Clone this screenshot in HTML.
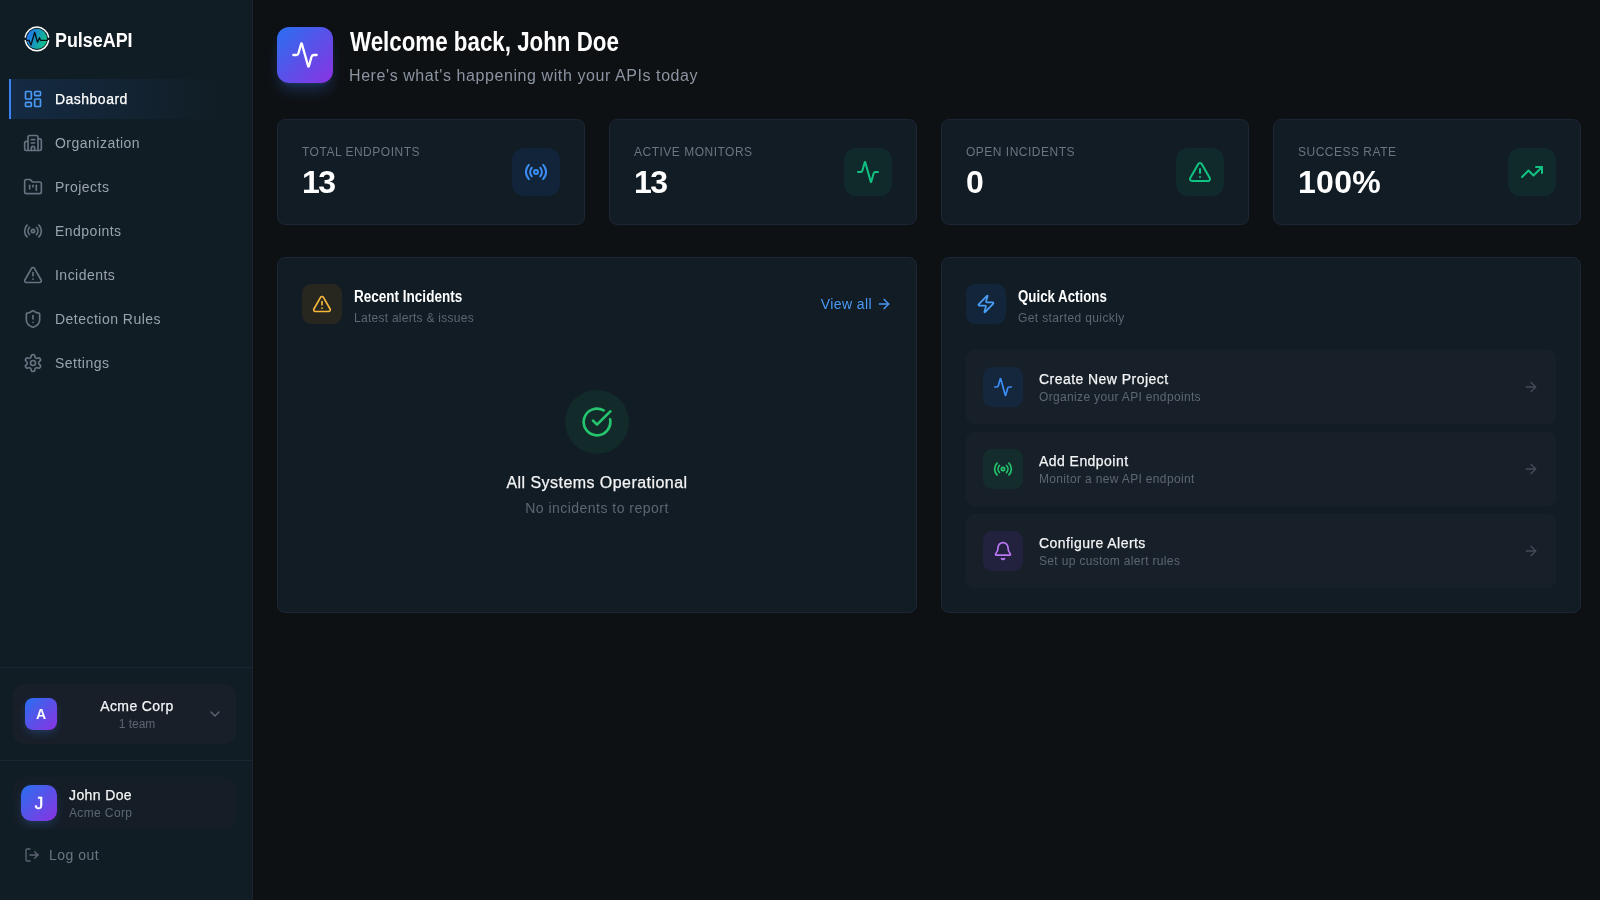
<!DOCTYPE html>
<html><head><meta charset="utf-8">
<style>
*{margin:0;padding:0;box-sizing:border-box}
html,body{width:1600px;height:900px;overflow:hidden;background:#0e1114;font-family:"Liberation Sans",sans-serif;color:#f3f4f6}
.abs{position:absolute}
svg{display:block;fill:none;stroke:currentColor;stroke-linecap:round;stroke-linejoin:round}
#sb{position:absolute;left:0;top:0;width:253px;height:900px;background:#111d24;border-right:1px solid #1b2532}
.nav{position:absolute;left:9px;width:234px;height:40px;color:#9aa3ae;font-size:14px;letter-spacing:.48px}
.nav svg{position:absolute;left:14px;top:10px;width:20px;height:20px;stroke-width:2;color:#687180}
.nav span{position:absolute;left:46px;top:0;line-height:40px;white-space:nowrap}
.nav.act{background:linear-gradient(90deg,rgba(40,120,245,.15),rgba(40,120,245,.05) 60%,rgba(40,120,245,0) 92%);color:#fff;border-left:2px solid #3b82f6}
.nav.act svg{left:12px;color:#4a9af5}
.nav.act span{left:44px}
.card{position:absolute;background:#111c24;border:1px solid #1c2634;border-radius:8px}
.lbl{position:absolute;left:24px;top:24px;font-size:12px;line-height:16px;letter-spacing:.5px;color:#6b7480;text-transform:uppercase;white-space:nowrap}
.num{position:absolute;left:24px;top:44px;font-size:32px;line-height:36px;font-weight:bold;color:#fff;letter-spacing:-1.6px}
.ibox{position:absolute;right:24px;top:28px;width:48px;height:48px;border-radius:12px}
.ibox svg{position:absolute;left:12px;top:12px;width:24px;height:24px;stroke-width:2}
.med{-webkit-text-stroke:.25px currentColor}
.cond{display:inline-block;transform-origin:0 50%;white-space:nowrap;font-weight:bold}
.qa{position:absolute;left:24px;width:590px;height:74px;background:#172029;border:1px solid #18212a;border-radius:8px}
.qa .ic{position:absolute;left:16px;top:16px;width:40px;height:40px;border-radius:9px}
.qa .ic svg{position:absolute;left:10px;top:10px;width:20px;height:20px;stroke-width:2}
.qa .t{position:absolute;left:72px;top:18px;font-size:14px;line-height:20px;color:#f3f4f6;white-space:nowrap;letter-spacing:.45px;-webkit-text-stroke:.25px currentColor}
.qa .s{position:absolute;left:72px;top:38px;font-size:12px;line-height:16px;color:#5d6673;white-space:nowrap;letter-spacing:.34px}
.qa .arr{position:absolute;right:16px;top:28px;width:16px;height:16px;color:#444c57;stroke-width:2}
</style></head><body>
<div id="root" style="position:absolute;left:0;top:0;width:1600px;height:900px;will-change:transform">
<div id="sb">
  <!-- logo -->
  <svg class="abs" style="left:23px;top:26px;width:28px;height:28px" viewBox="0 0 28 28">
    <defs><linearGradient id="lg" x1="0" y1="0.3" x2="1" y2="0.7"><stop offset="0" stop-color="#1f74f2"/><stop offset="1" stop-color="#0fc47f"/></linearGradient></defs>
    <circle cx="13.9" cy="12.9" r="10.2" fill="url(#lg)" stroke="none"/>
    <path d="M2.24 11.1A11.8 11.8 0 0 1 25.56 11.1M25.56 14.7A11.8 11.8 0 0 1 2.24 14.7" stroke="#fff" stroke-width="1.5"/>
    <path d="M4 14.3H6L8 19L11.7 6.3L14.5 16.2L16.5 11.7L17.5 14.3H23.8" stroke="#0b0f14" stroke-width="1.3"/>
  </svg>
  <div class="abs" style="left:55px;top:28px;font-size:20px;line-height:24px;color:#fff"><span class="cond" id="logoT" style="transform:scaleX(.895)">PulseAPI</span></div>

  <div class="nav act" style="top:79px"><svg viewBox="0 0 24 24"><rect width="7" height="9" x="3" y="3" rx="1"/><rect width="7" height="5" x="14" y="3" rx="1"/><rect width="7" height="9" x="14" y="12" rx="1"/><rect width="7" height="5" x="3" y="16" rx="1"/></svg><span class="med">Dashboard</span></div>
  <div class="nav" style="top:123px"><svg viewBox="0 0 24 24"><path d="M10 12h4"/><path d="M10 8h4"/><path d="M14 21v-3a2 2 0 0 0-4 0v3"/><path d="M6 10H4a2 2 0 0 0-2 2v7a2 2 0 0 0 2 2h16a2 2 0 0 0 2-2V9a2 2 0 0 0-2-2h-2"/><path d="M6 21V5a2 2 0 0 1 2-2h8a2 2 0 0 1 2 2v16"/></svg><span>Organization</span></div>
  <div class="nav" style="top:167px"><svg viewBox="0 0 24 24"><path d="M4 20h16a2 2 0 0 0 2-2V8a2 2 0 0 0-2-2h-7.93a2 2 0 0 1-1.66-.9l-.82-1.2A2 2 0 0 0 7.93 3H4a2 2 0 0 0-2 2v13c0 1.1.9 2 2 2Z"/><path d="M8 10v4"/><path d="M12 10v2"/><path d="M16 10v6"/></svg><span>Projects</span></div>
  <div class="nav" style="top:211px"><svg viewBox="0 0 24 24"><path d="M4.9 19.1C1 15.2 1 8.8 4.9 4.9"/><path d="M7.8 16.2c-2.3-2.3-2.3-6.1 0-8.5"/><circle cx="12" cy="12" r="2"/><path d="M16.2 7.8c2.3 2.3 2.3 6.1 0 8.5"/><path d="M19.1 4.9C23 8.8 23 15.1 19.1 19"/></svg><span>Endpoints</span></div>
  <div class="nav" style="top:255px"><svg viewBox="0 0 24 24"><path d="m21.73 18-8-14a2 2 0 0 0-3.48 0l-8 14A2 2 0 0 0 4 21h16a2 2 0 0 0 1.73-3"/><path d="M12 9v4"/><path d="M12 17h.01"/></svg><span>Incidents</span></div>
  <div class="nav" style="top:299px"><svg viewBox="0 0 24 24"><path d="M20 13c0 5-3.5 7.5-7.66 8.95a1 1 0 0 1-.67-.01C7.5 20.5 4 18 4 13V6a1 1 0 0 1 1-1c2 0 4.5-1.2 6.24-2.72a1.170 1.170 0 0 1 1.52 0C14.51 3.81 17 5 19 5a1 1 0 0 1 1 1z"/><path d="M12 8v4"/><path d="M12 16h.01"/></svg><span>Detection Rules</span></div>
  <div class="nav" style="top:343px"><svg viewBox="0 0 24 24"><path d="M12.22 2h-.44a2 2 0 0 0-2 2v.18a2 2 0 0 1-1 1.73l-.43.25a2 2 0 0 1-2 0l-.15-.08a2 2 0 0 0-2.730.73l-.22.38a2 2 0 0 0 .73 2.73l.15.1a2 2 0 0 1 1 1.72v.51a2 2 0 0 1-1 1.74l-.15.09a2 2 0 0 0-.73 2.73l.22.38a2 2 0 0 0 2.73.73l.15-.08a2 2 0 0 1 2 0l.43.25a2 2 0 0 1 1 1.73V20a2 2 0 0 0 2 2h.44a2 2 0 0 0 2-2v-.18a2 2 0 0 1 1-1.73l.43-.25a2 2 0 0 1 2 0l.15.08a2 2 0 0 0 2.73-.73l.22-.39a2 2 0 0 0-.73-2.73l-.15-.08a2 2 0 0 1-1-1.74v-.5a2 2 0 0 1 1-1.74l.15-.09a2 2 0 0 0 .73-2.73l-.22-.38a2 2 0 0 0-2.73-.73l-.15.08a2 2 0 0 1-2 0l-.43-.25a2 2 0 0 1-1-1.73V4a2 2 0 0 0-2-2z"/><circle cx="12" cy="12" r="3"/></svg><span>Settings</span></div>

  <div class="abs" style="left:0;top:667px;width:252px;height:1px;background:#1b2532"></div>
  <div class="abs" style="left:13px;top:684px;width:223px;height:60px;background:#181f29;border-radius:12px"></div>
  <div class="abs" style="left:25px;top:698px;width:32px;height:32px;border-radius:8px;background:linear-gradient(135deg,#2870f0,#8b32e2);box-shadow:0 4px 10px -2px rgba(59,130,246,.3);color:#fff;font-weight:bold;font-size:14px;line-height:32px;text-align:center">A</div>
  <div class="abs" style="left:57px;top:697px;width:160px;text-align:center;font-size:14px;line-height:18px;color:#f3f4f6;letter-spacing:.4px;-webkit-text-stroke:.25px currentColor">Acme Corp</div>
  <div class="abs" style="left:57px;top:716px;width:160px;text-align:center;font-size:12px;line-height:16px;color:#5d6673">1 team</div>
  <svg class="abs" style="left:207px;top:706px;width:16px;height:16px;color:#5d6673;stroke-width:2" viewBox="0 0 24 24"><path d="m6 9 6 6 6-6"/></svg>

  <div class="abs" style="left:0;top:760px;width:252px;height:1px;background:#1b2532"></div>
  <div class="abs" style="left:13px;top:777px;width:223px;height:52px;background:#151e27;border-radius:12px"></div>
  <div class="abs" style="left:21px;top:785px;width:36px;height:36px;border-radius:10px;background:linear-gradient(135deg,#2870f0,#8b32e2);box-shadow:0 4px 10px -2px rgba(59,130,246,.3);color:#fff;font-size:17px;line-height:37px;text-align:center;-webkit-text-stroke:.5px #fff">J</div>
  <div class="abs" style="left:69px;top:786px;font-size:14px;line-height:18px;color:#f3f4f6;letter-spacing:.38px;-webkit-text-stroke:.25px currentColor">John Doe</div>
  <div class="abs" style="left:69px;top:805px;font-size:12px;line-height:16px;color:#5d6673;letter-spacing:.37px">Acme Corp</div>
  <svg class="abs" style="left:24px;top:847px;width:16px;height:16px;color:#5d6673;stroke-width:2" viewBox="0 0 24 24"><path d="M9 21H5a2 2 0 0 1-2-2V5a2 2 0 0 1 2-2h4"/><polyline points="16 17 21 12 16 7"/><line x1="21" x2="9" y1="12" y2="12"/></svg>
  <div class="abs" style="left:49px;top:846px;font-size:14px;line-height:18px;color:#6b7480;letter-spacing:.5px">Log out</div>
</div>

<!-- header -->
<div class="abs" style="left:277px;top:27px;width:56px;height:56px;border-radius:12px;background:linear-gradient(135deg,#2870f0,#8b32e2);box-shadow:0 10px 15px -3px rgba(59,130,246,.25),0 4px 6px -4px rgba(59,130,246,.25)">
  <svg class="abs" style="left:14px;top:14px;width:28px;height:28px;color:#fff;stroke-width:2" viewBox="0 0 24 24"><path d="M22 12h-2.48a2 2 0 0 0-1.930 1.46l-2.35 8.36a.25.25 0 0 1-.48 0L9.24 2.18a.25.25 0 0 0-.48 0l-2.35 8.36A2 2 0 0 1 4.49 12H2"/></svg>
</div>
<div class="abs" style="left:350px;top:26px;font-size:27px;line-height:32px;color:#fff"><span class="cond" id="ttl" style="transform:scaleX(.827)">Welcome back, John Doe</span></div>
<div class="abs" style="left:349px;top:66px;font-size:16px;line-height:20px;color:#8b94a1;white-space:nowrap;letter-spacing:.58px">Here's what's happening with your APIs today</div>

<!-- stat cards -->
<div class="card" style="left:277px;top:119px;width:308px;height:106px">
  <div class="lbl">Total Endpoints</div><div class="num">13</div>
  <div class="ibox" style="background:#122439;color:#3b8ef5"><svg viewBox="0 0 24 24"><path d="M4.9 19.1C1 15.2 1 8.8 4.9 4.9"/><path d="M7.8 16.2c-2.3-2.3-2.3-6.1 0-8.5"/><circle cx="12" cy="12" r="2"/><path d="M16.2 7.8c2.3 2.3 2.3 6.1 0 8.5"/><path d="M19.1 4.9C23 8.8 23 15.1 19.1 19"/></svg></div>
</div>
<div class="card" style="left:609px;top:119px;width:308px;height:106px">
  <div class="lbl">Active Monitors</div><div class="num">13</div>
  <div class="ibox" style="background:#102a2c;color:#12c283"><svg viewBox="0 0 24 24"><path d="M22 12h-2.48a2 2 0 0 0-1.93 1.46l-2.35 8.36a.25.25 0 0 1-.48 0L9.24 2.18a.25.25 0 0 0-.48 0l-2.35 8.36A2 2 0 0 1 4.49 12H2"/></svg></div>
</div>
<div class="card" style="left:941px;top:119px;width:308px;height:106px">
  <div class="lbl">Open Incidents</div><div class="num">0</div>
  <div class="ibox" style="background:#102a2c;color:#12c283"><svg viewBox="0 0 24 24"><path d="m21.73 18-8-14a2 2 0 0 0-3.48 0l-8 14A2 2 0 0 0 4 21h16a2 2 0 0 0 1.73-3"/><path d="M12 9v4"/><path d="M12 17h.01"/></svg></div>
</div>
<div class="card" style="left:1273px;top:119px;width:308px;height:106px">
  <div class="lbl">Success Rate</div><div class="num" style="letter-spacing:.3px">100%</div>
  <div class="ibox" style="background:#102a2c;color:#12c283"><svg viewBox="0 0 24 24"><polyline points="22 7 13.5 15.5 8.5 10.5 2 17"/><polyline points="16 7 22 7 22 13"/></svg></div>
</div>

<!-- recent incidents -->
<div class="card" style="left:277px;top:257px;width:640px;height:356px">
  <div class="abs" style="left:24px;top:26px;width:40px;height:40px;border-radius:9px;background:#27261f;color:#f5b83d">
    <svg class="abs" style="left:10px;top:10px;width:20px;height:20px;stroke-width:2" viewBox="0 0 24 24"><path d="m21.73 18-8-14a2 2 0 0 0-3.48 0l-8 14A2 2 0 0 0 4 21h16a2 2 0 0 0 1.73-3"/><path d="M12 9v4"/><path d="M12 17h.01"/></svg>
  </div>
  <div class="abs" style="left:76px;top:29px;font-size:16px;line-height:20px;color:#fff"><span class="cond" id="rt" style="transform:scaleX(.845)">Recent Incidents</span></div>
  <div class="abs" style="left:76px;top:52px;font-size:12px;line-height:16px;color:#5d6673;white-space:nowrap;letter-spacing:.27px">Latest alerts &amp; issues</div>
  <div class="abs" style="right:24px;top:36px;font-size:14px;line-height:20px;color:#4a9af5;white-space:nowrap;padding-right:20px;letter-spacing:.4px">View all
    <svg class="abs" style="right:0;top:2px;width:16px;height:16px;stroke-width:2" viewBox="0 0 24 24"><path d="M5 12h14"/><path d="m12 5 7 7-7 7"/></svg></div>
  <div class="abs" style="left:287px;top:132px;width:64px;height:64px;border-radius:50%;background:#122a29;color:#25c46e">
    <svg class="abs" style="left:16px;top:16px;width:32px;height:32px;stroke-width:2" viewBox="0 0 24 24"><path d="M21.801 10A10 10 0 1 1 17 3.335"/><path d="m9 11 3 3L22 4"/></svg>
  </div>
  <div class="abs" style="left:0;top:214px;width:638px;text-align:center;font-size:16px;line-height:22px;color:#f3f4f6;letter-spacing:.45px;-webkit-text-stroke:.25px currentColor">All Systems Operational</div>
  <div class="abs" style="left:0;top:241px;width:638px;text-align:center;font-size:14px;line-height:18px;color:#5d6673;letter-spacing:.48px">No incidents to report</div>
</div>

<!-- quick actions -->
<div class="card" style="left:941px;top:257px;width:640px;height:356px">
  <div class="abs" style="left:24px;top:26px;width:40px;height:40px;border-radius:9px;background:#13253a;color:#4a9ff7">
    <svg class="abs" style="left:10px;top:10px;width:20px;height:20px;stroke-width:2" viewBox="0 0 24 24"><path d="M4 14a1 1 0 0 1-.78-1.63l9.9-10.2a.5.5 0 0 1 .86.46l-1.92 6.02A1 1 0 0 0 13 10h7a1 1 0 0 1 .78 1.63l-9.9 10.2a.5.5 0 0 1-.86-.46l1.92-6.02A1 1 0 0 0 11 14z"/></svg>
  </div>
  <div class="abs" style="left:76px;top:29px;font-size:16px;line-height:20px;color:#fff"><span class="cond" id="qt" style="transform:scaleX(.83)">Quick Actions</span></div>
  <div class="abs" style="left:76px;top:52px;font-size:12px;line-height:16px;color:#5d6673;white-space:nowrap;letter-spacing:.38px">Get started quickly</div>

  <div class="qa" style="top:92px">
    <div class="ic" style="background:#15273d;color:#3b8ef5"><svg viewBox="0 0 24 24"><path d="M22 12h-2.48a2 2 0 0 0-1.93 1.46l-2.35 8.36a.25.25 0 0 1-.48 0L9.24 2.18a.25.25 0 0 0-.48 0l-2.35 8.36A2 2 0 0 1 4.49 12H2"/></svg></div>
    <div class="t">Create New Project</div><div class="s">Organize your API endpoints</div>
    <svg class="arr" viewBox="0 0 24 24"><path d="M5 12h14"/><path d="m12 5 7 7-7 7"/></svg>
  </div>
  <div class="qa" style="top:174px">
    <div class="ic" style="background:#142d2c;color:#25c46e"><svg viewBox="0 0 24 24"><path d="M4.9 19.1C1 15.2 1 8.8 4.9 4.9"/><path d="M7.8 16.2c-2.3-2.3-2.3-6.1 0-8.5"/><circle cx="12" cy="12" r="2"/><path d="M16.2 7.8c2.3 2.3 2.3 6.1 0 8.5"/><path d="M19.1 4.9C23 8.8 23 15.1 19.1 19"/></svg></div>
    <div class="t">Add Endpoint</div><div class="s">Monitor a new API endpoint</div>
    <svg class="arr" viewBox="0 0 24 24"><path d="M5 12h14"/><path d="m12 5 7 7-7 7"/></svg>
  </div>
  <div class="qa" style="top:256px">
    <div class="ic" style="background:#23223e;color:#bd78f7"><svg viewBox="0 0 24 24"><path d="M10.268 21a2 2 0 0 0 3.464 0"/><path d="M3.262 15.326A1 1 0 0 0 4 17h16a1 1 0 0 0 .74-1.673C19.41 13.956 18 12.499 18 8A6 6 0 0 0 6 8c0 4.499-1.411 5.956-2.738 7.326"/></svg></div>
    <div class="t">Configure Alerts</div><div class="s">Set up custom alert rules</div>
    <svg class="arr" viewBox="0 0 24 24"><path d="M5 12h14"/><path d="m12 5 7 7-7 7"/></svg>
  </div>
</div>
</div>
</body></html>
